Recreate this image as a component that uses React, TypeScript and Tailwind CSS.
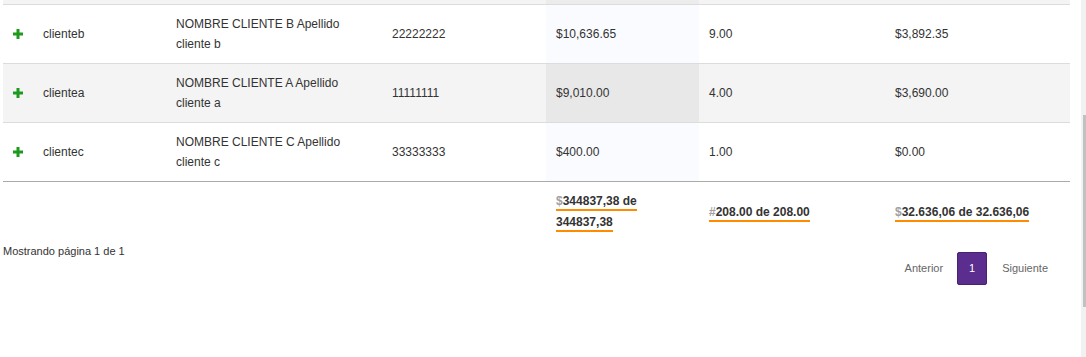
const rows = [
  { user: "clienteb", name: "NOMBRE CLIENTE B Apellido cliente b", id: "22222222", amount: "$10,636.65", qty: "9.00", total: "$3,892.35" },
  { user: "clientea", name: "NOMBRE CLIENTE A Apellido cliente a", id: "11111111", amount: "$9,010.00", qty: "4.00", total: "$3,690.00" },
  { user: "clientec", name: "NOMBRE CLIENTE C Apellido cliente c", id: "33333333", amount: "$400.00", qty: "1.00", total: "$0.00" },
];

const cols = "grid grid-cols-[30px_133px_216px_164px_153px_186px_185px]";

function PlusIcon() {
  return (
    <svg width="10" height="10" viewBox="0 0 10 10" className="block">
      <rect x="3.5" y="0" width="3" height="10" fill="#1e9a1e" />
      <rect x="0" y="3.5" width="10" height="3" fill="#1e9a1e" />
    </svg>
  );
}

function Total({ sign, children }: { sign: string; children: React.ReactNode }) {
  return (
    <span className="border-b-2 border-[#ff8c00] pb-px font-bold text-[#333]">
      <span className="text-[#a0a0a0]">{sign}</span>
      {children}
    </span>
  );
}

export default function App() {
  return (
    <div className="flex h-[357px] w-[1086px] bg-white font-['Liberation_Sans',Arial,sans-serif] text-[12px] text-[#333]">
      <div className="ml-[3px] w-[1067px]">
        {/* tail of the previous (striped) row */}
        <div className={`${cols} h-[4px] bg-[#f4f4f4]`}>
          <div />
          <div />
          <div />
          <div />
          <div className="bg-[#ececec]" />
          <div />
          <div />
        </div>

        {rows.map((r, i) => {
          const striped = i % 2 === 1;
          return (
            <div
              key={r.user}
              className={`${cols} h-[59px] border-t border-[#dcdcdc] leading-[20px] ${striped ? "bg-[#f4f4f4]" : "bg-white"}`}
            >
              <div className="flex items-center pl-[10px]">
                <PlusIcon />
              </div>
              <div className="flex items-center px-[10px]">{r.user}</div>
              <div className="flex items-center px-[10px]">{r.name}</div>
              <div className="flex items-center px-[10px]">{r.id}</div>
              <div className={`flex items-center px-[10px] ${striped ? "bg-[#e8e8e8]" : "bg-[#fafbfe]"}`}>{r.amount}</div>
              <div className="flex items-center px-[10px]">{r.qty}</div>
              <div className="flex items-center px-[10px]">{r.total}</div>
            </div>
          );
        })}

        {/* footer totals */}
        <div className={`${cols} border-t border-[#aaaaaa] pt-[9px] pb-2 leading-[21px]`}>
          <div />
          <div />
          <div />
          <div />
          <div className="flex items-center px-[10px]">
            <div>
              <Total sign="$">344837,38 de 344837,38</Total>
            </div>
          </div>
          <div className="flex items-center px-[10px]">
            <div>
              <Total sign="#">208.00 de 208.00</Total>
            </div>
          </div>
          <div className="flex items-center px-[10px]">
            <div>
              <Total sign="$">32.636,06 de 32.636,06</Total>
            </div>
          </div>
        </div>

        <div className="flex items-start justify-between">
          <div className="pt-[2px] text-[11px] leading-[16px] text-[#333]">Mostrando página 1 de 1</div>
          <div className="mt-[11px] mr-[22px] flex items-center text-[11px] text-[#666]">
            <span>Anterior</span>
            <span className="ml-[14px] flex h-[33px] w-[30px] items-center justify-center rounded-[2px] border border-[#46226f] bg-[#5b2d8e] text-white">
              1
            </span>
            <span className="ml-[15px]">Siguiente</span>
          </div>
        </div>
      </div>

      <div className="ml-[11px] h-full w-[5px] bg-[#f1f1f1]">
        <div className="mt-[115px] ml-[2px] h-[192px] w-[3px] bg-[#c1c1c1]" />
      </div>
    </div>
  );
}
